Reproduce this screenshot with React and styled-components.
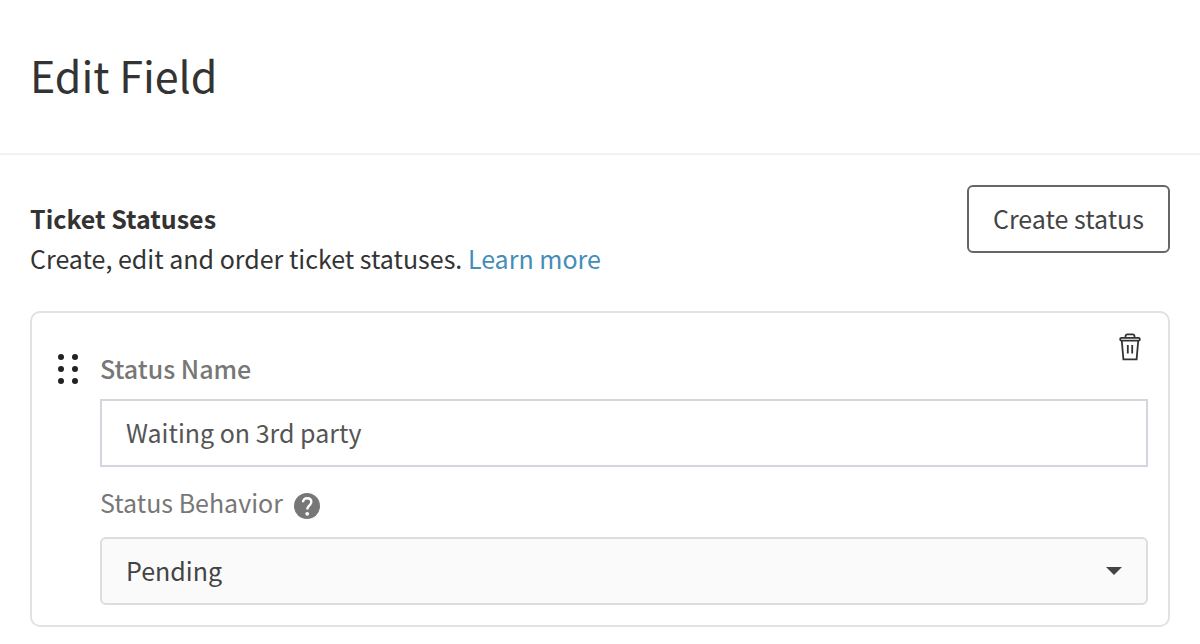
import React, { useState } from "react";
import styled, { createGlobalStyle } from "styled-components";

const App = () => {
  const [name, setName] = useState("Waiting on 3rd party");
  const [behavior, setBehavior] = useState("Pending");

  return (
    <>
      <GlobalStyle />
      <Header>
        <Title>Edit Field</Title>
      </Header>
      <Main>
        <Intro>
          <div>
            <SectionTitle>Ticket Statuses</SectionTitle>
            <Description>
              Create, edit and order ticket statuses. <Link href="#learn-more">Learn more</Link>
            </Description>
          </div>
          <CreateButton type="button">Create status</CreateButton>
        </Intro>
        <Card>
          <DragHandle type="button" aria-label="Reorder status">
            <DotsIcon />
          </DragHandle>
          <Fields>
            <CardTop>
              <Label htmlFor="status-name" $bold>
                Status Name
              </Label>
              <DeleteButton type="button" aria-label="Delete status">
                <TrashIcon />
              </DeleteButton>
            </CardTop>
            <Input id="status-name" value={name} onChange={(e) => setName(e.target.value)} />
            <LabelRow>
              <Label htmlFor="status-behavior">Status Behavior</Label>
              <HelpIcon />
            </LabelRow>
            <SelectBox>
              <Select id="status-behavior" value={behavior} onChange={(e) => setBehavior(e.target.value)}>
                <option>Pending</option>
              </Select>
              <Caret width="16" height="8" viewBox="0 0 16 8" aria-hidden="true">
                <path d="M0 0h16L8 8z" fill="#444444" />
              </Caret>
            </SelectBox>
          </Fields>
        </Card>
      </Main>
    </>
  );
};

const DotsIcon = () => (
  <svg width="20" height="30" viewBox="0 0 20 30" fill="#222222" aria-hidden="true">
    {[3, 15, 27].map((y) => (
      <React.Fragment key={y}>
        <circle cx="3" cy={y} r="3" />
        <circle cx="17" cy={y} r="3" />
      </React.Fragment>
    ))}
  </svg>
);

const TrashIcon = () => (
  <svg width="22" height="28" viewBox="0 0 22 28" fill="none" stroke="#333333" strokeWidth="1.8" aria-hidden="true">
    <path d="M6.5 5V3.4Q6.5 1.4 8.5 1.4h5q2 0 2 2V5" />
    <rect x="1.2" y="4.9" width="19.6" height="2.8" rx="1.2" />
    <path d="M2.8 8l1.6 18.3h13.2L19.2 8M8.8 12v8.6M13.2 12v8.6" />
  </svg>
);

const HelpIcon = () => (
  <HelpSvg width="26" height="26" viewBox="0 0 26 26" fill="none" role="img" aria-label="Help">
    <circle cx="13" cy="13" r="13" fill="#777777" />
    <path
      d="M9 9.2C9 6.7 10.7 5.2 13.1 5.2s4.2 1.5 4.2 3.8c0 3.3-4 3.5-4 7.4"
      stroke="#ffffff"
      strokeWidth="2.4"
    />
    <circle cx="13.2" cy="20.8" r="1.9" fill="#ffffff" />
  </HelpSvg>
);

const GlobalStyle = createGlobalStyle`
  * {
    box-sizing: border-box;
  }
  body {
    margin: 0;
    background: #ffffff;
    color: #333333;
  }
  body, button, input, select {
    font-family: "Noto Sans CJK SC", "Noto Sans", sans-serif;
    font-size: 25px;
  }
`;

const Header = styled.header`
  padding: 44px 30px 49px;
  border-bottom: 2px solid #f2f2f2;
`;

const Title = styled.h1`
  margin: 0;
  font-size: 43px;
  font-weight: 400;
  line-height: 60px;
`;

const Main = styled.main`
  padding: 30px;
`;

const Intro = styled.div`
  display: flex;
  justify-content: space-between;
  align-items: flex-start;
  margin-bottom: 33px;
`;

const SectionTitle = styled.h2`
  margin: 13px 0 0;
  font-size: 25px;
  font-weight: 700;
  line-height: 40px;
`;

const Description = styled.p`
  margin: 0;
  line-height: 40px;
`;

const Link = styled.a`
  color: #448db8;
  text-decoration: none;
`;

const CreateButton = styled.button`
  height: 68px;
  padding: 0 24px 2px;
  border: 2px solid #666666;
  border-radius: 6px;
  background: #ffffff;
  color: #444444;
  cursor: pointer;
`;

const Card = styled.section`
  display: flex;
  align-items: flex-start;
  gap: 22px;
  padding: 20px 20px 20px 26px;
  border: 2px solid #e2e2e2;
  border-radius: 10px;
`;

const DragHandle = styled.button`
  display: flex;
  margin-top: 21px;
  padding: 0;
  border: 0;
  background: none;
  cursor: grab;
`;

const Fields = styled.div`
  flex: 1;
`;

const CardTop = styled.div`
  display: flex;
  justify-content: space-between;
  align-items: flex-start;
  height: 66px;
`;

const Label = styled.label`
  margin-top: ${(props) => (props.$bold ? "15px" : "0")};
  color: #777777;
  font-weight: ${(props) => (props.$bold ? 500 : 400)};
  line-height: 40px;
`;

const DeleteButton = styled.button`
  display: flex;
  margin-right: 7px;
  padding: 0;
  border: 0;
  background: none;
  cursor: pointer;
`;

const Input = styled.input`
  display: block;
  width: 100%;
  height: 68px;
  padding: 0 24px 2px;
  border: 2px solid #d3d6de;
  border-radius: 0;
  background: #ffffff;
  color: #555555;
`;

const LabelRow = styled.div`
  display: flex;
  align-items: flex-start;
  gap: 11px;
  padding: 15px 0;
`;

const HelpSvg = styled.svg`
  margin-top: 11px;
`;

const SelectBox = styled.div`
  position: relative;
`;

const Select = styled.select`
  display: block;
  width: 100%;
  height: 68px;
  padding: 0 24px 2px;
  border: 2px solid #dddddd;
  border-radius: 6px;
  appearance: none;
  background: #fafafa;
  color: #444444;
`;

const Caret = styled.svg`
  position: absolute;
  top: 30px;
  right: 26px;
  pointer-events: none;
`;

export default App;
